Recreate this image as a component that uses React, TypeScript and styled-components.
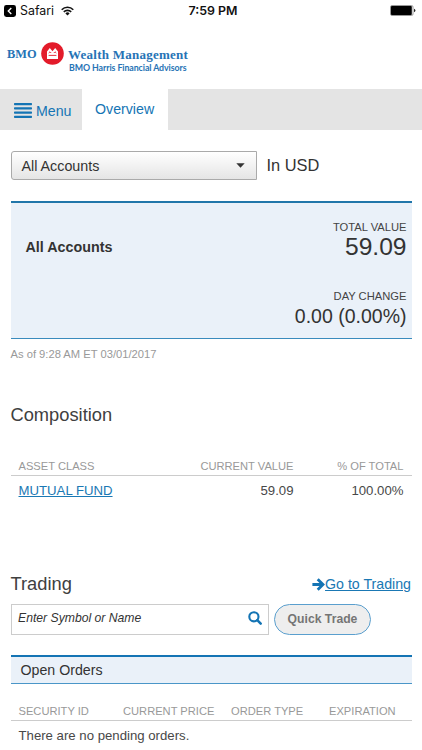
import React from "react";
import styled, { createGlobalStyle } from "styled-components";

const Global = createGlobalStyle`
  * { box-sizing: border-box; }
  html, body { margin: 0; padding: 0; background: #fff; }
  body { font-family: "Liberation Sans", Arial, sans-serif; color: #333; overflow: hidden; }
`;

const Page = styled.div`
  width: 422px;
  height: 750px;
  overflow: hidden;
  display: flex;
  flex-direction: column;
  background: #fff;
`;

const StatusBar = styled.header`
  flex: none;
  height: 22px;
  display: grid;
  grid-template-columns: 1fr auto 1fr;
  align-items: center;
  padding: 0 6px 0 4px;
  color: #111;
  font-family: Inter, sans-serif;
  font-size: 12.4px;
  line-height: 20px;
  svg { display: block; }
`;
const StatusLeft = styled.div`
  display: flex;
  align-items: center;
  gap: 4px;
  height: 20px;
  padding-bottom: 1px;
  svg:last-child { margin-left: 3px; }
`;
const Clock = styled.div`
  font-weight: 600;
  padding-left: 6px;
`;
const StatusRight = styled.div`
  display: flex;
  justify-content: flex-end;
  padding-bottom: 1px;
`;

const Brand = styled.div`
  flex: none;
  height: 67px;
  display: flex;
  align-items: flex-start;
  padding: 20px 0 0 7px;
  color: #2673b5;
`;
const BrandWord = styled.span`
  font: 700 12.4px/25px "Liberation Serif", serif;
  width: 34px;
  white-space: nowrap;
`;
const BrandText = styled.div`
  margin-left: 4px;
  display: flex;
  flex-direction: column;
`;
const BrandTitle = styled.span`
  font: 700 13px/25px "Liberation Serif", serif;
  letter-spacing: 0.25px;
  white-space: nowrap;
`;
const BrandSub = styled.span`
  font: 700 8.8px/10px Lato, sans-serif;
  margin: -4px 0 0 1px;
  letter-spacing: -0.08px;
  white-space: nowrap;
`;

const Nav = styled.nav`
  flex: none;
  height: 41px;
  display: flex;
  background: #e4e4e4;
  color: #1474b4;
  font-size: 14.2px;
  line-height: 20px;
`;
const MenuButton = styled.div`
  width: 82px;
  display: flex;
  align-items: flex-start;
  gap: 4px;
  padding: 12px 0 0 14px;
  svg { display: block; margin-top: 2px; }
`;
const Tab = styled.div`
  width: 86px;
  padding: 10px 0 0 13px;
  background: #fff;
`;

const Content = styled.main`
  padding: 21px 10px 0 10.5px;
  display: flex;
  flex-direction: column;
`;

const AccountRow = styled.div`
  display: flex;
  height: 29px;
  align-items: center;
  gap: 10px;
  font-size: 16.4px;
`;
const Select = styled.div`
  width: 246px;
  height: 29px;
  border: 1px solid #aaa;
  border-radius: 3px 0 0 3px;
  background: linear-gradient(#fff, #e5e5e5);
  display: flex;
  align-items: center;
  justify-content: space-between;
  padding: 0 11px 0 10px;
  font-size: 14.3px;
`;

const Summary = styled.section`
  margin-top: 21px;
  height: 138px;
  background: #eaf1f9;
  border-top: 2px solid #2176aa;
  border-bottom: 1px solid #3a8bbd;
  display: flex;
  justify-content: space-between;
  padding: 0 5.5px 0 15px;
`;
const AccountName = styled.strong`
  font-size: 14.3px;
  line-height: 20px;
  padding-top: 34px;
`;
const Figures = styled.div`
  display: flex;
  flex-direction: column;
  align-items: flex-end;
  padding-top: 14px;
`;
const FigureLabel = styled.span`
  font-size: 11.2px;
  line-height: 20px;
  color: #444;
`;
const FigureValue = styled.span<{ $size: number; $gap?: number }>`
  font-size: ${(p) => p.$size}px;
  line-height: 24px;
  margin-top: -2px;
  margin-bottom: ${(p) => p.$gap ?? 0}px;
`;

const AsOf = styled.div`
  margin-top: 5px;
  font-size: 11.2px;
  line-height: 20px;
  color: #999;
`;

const Heading = styled.h2`
  margin: 0;
  font-size: 18.3px;
  font-weight: 400;
  line-height: 24px;
  color: #404040;
`;
const CompositionHeading = styled(Heading)`
  margin-top: 39px;
`;

const Table = styled.div<{ $columns: string }>`
  display: grid;
  grid-template-columns: ${(p) => p.$columns};
`;
const CompositionTable = styled(Table)`
  margin-top: 29px;
`;
const OrdersTable = styled(Table)`
  margin-top: 17px;
`;
const HeadCell = styled.div<{ $right?: boolean }>`
  height: 20px;
  border-bottom: 1px solid #ccc;
  font-size: 11.15px;
  line-height: 20px;
  padding: ${(p) => (p.$right ? "0 8px 0 0" : "0 0 0 8px")};
  text-align: ${(p) => (p.$right ? "right" : "left")};
  color: #999;
  white-space: nowrap;
`;
const Cell = styled.div<{ $right?: boolean; $span?: boolean }>`
  font-size: 13.2px;
  line-height: 20px;
  padding: ${(p) => (p.$right ? "5px 8px 0 0" : "5px 0 0 8px")};
  text-align: ${(p) => (p.$right ? "right" : "left")};
  grid-column: ${(p) => (p.$span ? "1 / -1" : "auto")};
  color: #484848;
`;
const Link = styled.a`
  color: #1a78b4;
  text-decoration: underline;
  text-decoration-thickness: 1px;
  text-underline-offset: 1px;
`;

const TradingHeader = styled.div`
  margin-top: 71px;
  display: flex;
  justify-content: space-between;
`;
const TradingLink = styled.div`
  display: flex;
  align-items: center;
  height: 24px;
  padding-right: 1px;
  font-size: 14.2px;
  svg { display: block; }
`;

const TradeForm = styled.div`
  margin-top: 8px;
  height: 31px;
  display: flex;
  gap: 5px;
`;
const SearchBox = styled.div`
  width: 258.5px;
  border: 1px solid #ccc;
  display: flex;
  justify-content: space-between;
  align-items: flex-start;
  padding: 3px 6px 0 6.5px;
  font-size: 12.2px;
  font-style: italic;
  line-height: 20px;
  svg { display: block; margin-top: 3px; }
`;
const QuickTrade = styled.div`
  width: 97px;
  border: 1px solid #5a9fce;
  border-radius: 16px;
  background: #eee;
  color: #757575;
  font-size: 12.2px;
  font-weight: 700;
  line-height: 29px;
  text-align: center;
`;
const OrdersBar = styled.div`
  margin-top: 20px;
  height: 29px;
  background: #eaf1f9;
  border-top: 2px solid #1474b4;
  border-bottom: 1px solid #4a96c8;
  padding: 1px 0 0 10px;
  font-size: 14.2px;
  line-height: 24px;
`;

const BackIcon = () => (
  <svg width="12" height="12" viewBox="0 0 12 12">
    <rect width="12" height="12" rx="2.4" fill="#000" />
    <path d="M7.3 3 4.3 6l3 3" fill="none" stroke="#fff" strokeWidth="1.4" />
  </svg>
);
const WifiIcon = () => (
  <svg width="13" height="10" viewBox="0 0 13 10">
    <g fill="none" stroke="#111" strokeWidth="1.6">
      <path d="M.7 3.7a8.2 8.2 0 0 1 11.6 0" />
      <path d="M2.8 5.9a5.2 5.2 0 0 1 7.4 0" />
    </g>
    <path d="M4.4 7.4a3 3 0 0 1 4.2 0L6.5 9.6z" fill="#111" />
  </svg>
);
const BatteryIcon = () => (
  <svg width="26" height="11" viewBox="0 0 26 11">
    <rect x=".5" y=".5" width="22.5" height="10" rx="1.5" fill="#fff" stroke="#999" />
    <rect x="1" y="1" width="20.8" height="9" rx=".7" fill="#000" />
    <path d="M24 3.7q1.4.5 1.4 1.8T24 7.3z" fill="#222" />
  </svg>
);
const Roundel = () => (
  <svg width="23" height="23" viewBox="0 0 23 23">
    <circle cx="11.5" cy="11.5" r="11.3" fill="#e31b2a" />
    <path
      d="M6 17V9.4L8.8 6l2.7 3.2L14.2 6 17 9.4V17z"
      fill="#fff"
    />
    <path d="M7.6 13.4h7.8M7.7 11l1.3-1.2 1.2 1.2M12.8 11l1.2-1.2 1.3 1.2" fill="none" stroke="#e31b2a" strokeWidth=".9" />
  </svg>
);
const BarsIcon = () => (
  <svg width="18" height="16" viewBox="0 0 18 16" fill="#1474b4">
    <rect y=".1" width="18" height="2.2" rx=".7" />
    <rect y="4.3" width="18" height="2.2" rx=".7" />
    <rect y="8.5" width="18" height="2.2" rx=".7" />
    <rect y="12.7" width="18" height="2.2" rx=".7" />
  </svg>
);
const CaretIcon = () => (
  <svg width="9" height="5" viewBox="0 0 9 5">
    <path d="M.3.3h8.4L4.5 4.8z" fill="#333" />
  </svg>
);
const ArrowIcon = () => (
  <svg width="13" height="13" viewBox="0 0 13 13">
    <path d="M.4 6.5h10.2M5.7 1.2 11 6.5l-5.3 5.3" fill="none" stroke="#1474b4" strokeWidth="2.8" />
  </svg>
);
const SearchIcon = () => (
  <svg width="14" height="14" viewBox="0 0 14 14">
    <g fill="none" stroke="#1474b4">
      <circle cx="5.9" cy="5.8" r="4.6" strokeWidth="2.1" />
      <path d="m9.3 9.2 3.4 3.4" strokeWidth="2.5" strokeLinecap="round" />
    </g>
  </svg>
);

export default function App() {
  return (
    <Page>
      <Global />
      <StatusBar>
        <StatusLeft>
          <BackIcon />
          <span>Safari</span>
          <WifiIcon />
        </StatusLeft>
        <Clock>7:59 PM</Clock>
        <StatusRight>
          <BatteryIcon />
        </StatusRight>
      </StatusBar>
      <Brand>
        <BrandWord>BMO</BrandWord>
        <Roundel />
        <BrandText>
          <BrandTitle>Wealth Management</BrandTitle>
          <BrandSub>BMO Harris Financial Advisors</BrandSub>
        </BrandText>
      </Brand>
      <Nav>
        <MenuButton>
          <BarsIcon />
          Menu
        </MenuButton>
        <Tab>Overview</Tab>
      </Nav>
      <Content>
        <AccountRow>
          <Select>
            All Accounts
            <CaretIcon />
          </Select>
          In USD
        </AccountRow>
        <Summary>
          <AccountName>All Accounts</AccountName>
          <Figures>
            <FigureLabel>TOTAL VALUE</FigureLabel>
            <FigureValue $size={24.6} $gap={27}>59.09</FigureValue>
            <FigureLabel>DAY CHANGE</FigureLabel>
            <FigureValue $size={19.5}>0.00 (0.00%)</FigureValue>
          </Figures>
        </Summary>
        <AsOf>As of 9:28 AM ET 03/01/2017</AsOf>
        <CompositionHeading>Composition</CompositionHeading>
        <CompositionTable $columns="160px 131px 110px">
          <HeadCell>ASSET CLASS</HeadCell>
          <HeadCell $right>CURRENT VALUE</HeadCell>
          <HeadCell $right>% OF TOTAL</HeadCell>
          <Cell>
            <Link>MUTUAL FUND</Link>
          </Cell>
          <Cell $right>59.09</Cell>
          <Cell $right>100.00%</Cell>
        </CompositionTable>
        <TradingHeader>
          <Heading>Trading</Heading>
          <TradingLink>
            <ArrowIcon />
            <Link>Go to Trading</Link>
          </TradingLink>
        </TradingHeader>
        <TradeForm>
          <SearchBox>
            Enter Symbol or Name
            <SearchIcon />
          </SearchBox>
          <QuickTrade>Quick Trade</QuickTrade>
        </TradeForm>
        <OrdersBar>Open Orders</OrdersBar>
        <OrdersTable $columns="104.5px 108px 98px 91px">
          <HeadCell>SECURITY ID</HeadCell>
          <HeadCell>CURRENT PRICE</HeadCell>
          <HeadCell>ORDER TYPE</HeadCell>
          <HeadCell>EXPIRATION</HeadCell>
          <Cell $span>There are no pending orders.</Cell>
        </OrdersTable>
      </Content>
    </Page>
  );
}
